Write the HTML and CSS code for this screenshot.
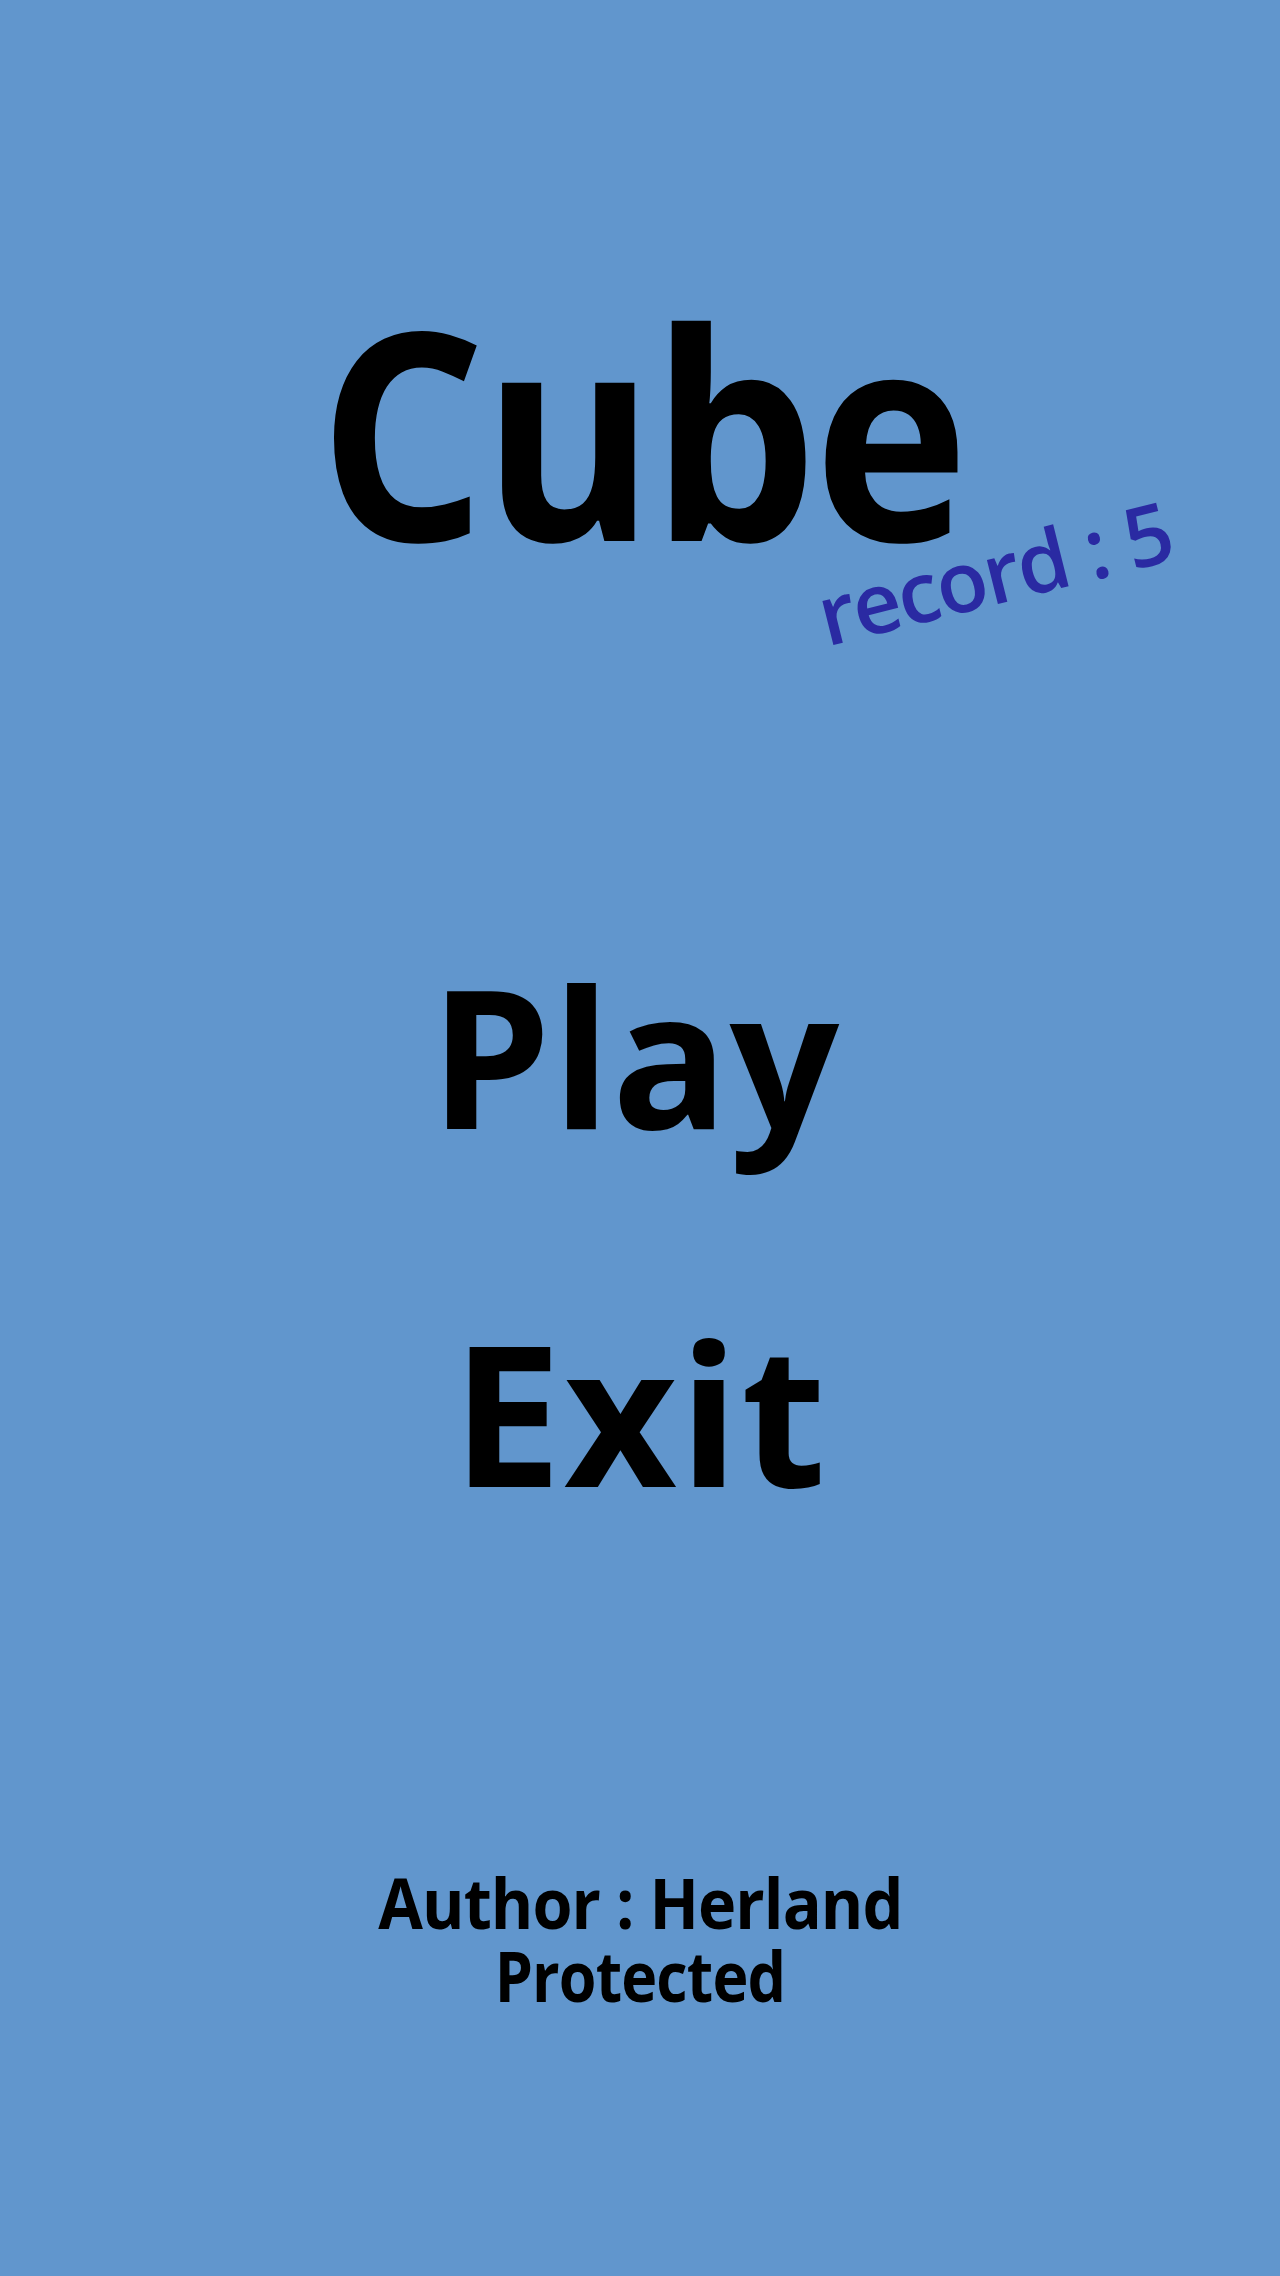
FILE: index.html
```html
<!DOCTYPE html>
<html lang="en">
<head>
<meta charset="utf-8">
<title>Cube</title>
<link rel="stylesheet" href="styles.css">
</head>
<body>
<main class="screen">
  <header class="title-block">
    <h1 class="title">Cube</h1>
    <div class="record">record : 5</div>
  </header>
  <nav class="menu">
    <div class="menu-item play">Play</div>
    <div class="menu-item exit">Exit</div>
  </nav>
  <footer class="credits">
    <div class="credit-line author">Author : Herland</div>
    <div class="credit-line protected">Protected</div>
  </footer>
</main>
</body>
</html>
```

FILE: styles.css
```css
html, body {
  margin: 0;
  padding: 0;
}
body {
  background: #6196cd;
  font-family: "Open Sans", "Noto Sans", sans-serif;
  color: #000;
}
.screen {
  height: 2276px;
  display: flex;
  flex-direction: column;
  align-items: center;
  padding-top: 284px;
  box-sizing: border-box;
  overflow: hidden;
}
.title-block {
  position: relative;
  width: 100%;
  display: flex;
  justify-content: center;
}
.title {
  margin: 0;
  font-size: 290px;
  line-height: 290px;
  font-weight: 700;
  letter-spacing: -4px;
  transform: scaleX(0.905);
  padding-left: 4px;
}
.record {
  position: absolute;
  left: 994px;
  top: 288px;
  transform: translate(-50%, -50%) rotate(-14deg);
  font-size: 84px;
  line-height: 84px;
  font-weight: 600;
  letter-spacing: -2px;
  color: #2a2aa2;
  white-space: nowrap;
}
.menu {
  display: flex;
  flex-direction: column;
  align-items: center;
  gap: 162px;
  margin-top: 384px;
}
.menu-item {
  font-weight: 700;
}
.play {
  font-size: 193px;
  line-height: 193px;
  letter-spacing: 1px;
  padding-right: 10px;
}
.exit {
  font-size: 196px;
  line-height: 196px;
  letter-spacing: 2px;
}
.credits {
  margin-top: 357px;
  display: flex;
  flex-direction: column;
  align-items: center;
}
.credit-line {
  font-size: 70px;
  line-height: 73px;
  font-weight: 700;
  letter-spacing: -1px;
}
.author {
  transform: scaleX(0.925);
}
.protected {
  transform: scaleX(0.87);
}
```
